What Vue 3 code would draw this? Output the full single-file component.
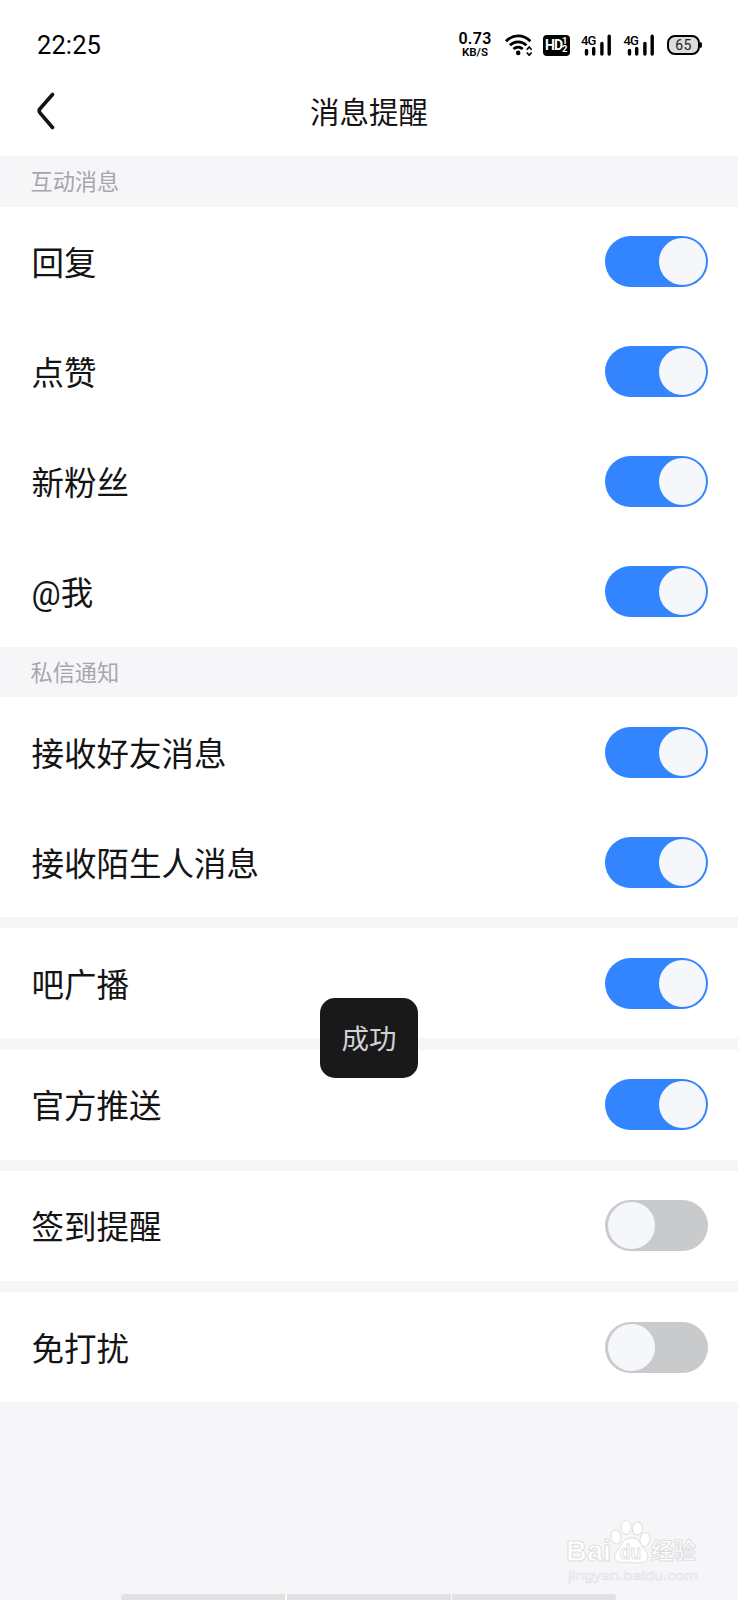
<template>
  <div class="page">
    <header class="status-bar">
      <span class="clock">22:25</span>
      <div class="indicators">
        <div class="speed">
          <span class="speed-value">0.73</span>
          <span class="speed-unit">KB/S</span>
        </div>
        <svg class="wifi" viewBox="0 0 28 22">
          <g fill="none" stroke="#000" stroke-width="2.8">
            <path d="M1 7.200C8 .2 18.400 .2 25.400 7.200" />
            <path d="M4.900 11.300C9.500 6.600 16.700 6.600 21.400 11.300" />
            <path d="M8.500 15.100C11.200 12.400 15 12.400 17.700 15.100" />
          </g>
          <circle cx="13.200" cy="18.900" r="2.300" />
          <path d="M21.800 15.700l2.400-2.700 2.400 2.700M21.800 18.500l2.400 2.700 2.400-2.700" fill="none" stroke="#000" stroke-width="1.700" />
        </svg>
        <div class="hd">
          <span class="hd-text">HD</span>
          <span class="hd-sims"><i>1</i><i>2</i></span>
        </div>
        <div v-for="n in 2" :key="n" class="signal">
          <span class="network">4G</span>
          <svg class="bars" viewBox="0 0 32 22">
            <path d="M5.500 16.500V20M12.700 14.500V20M20.900 9.500V20M28.200 2.300V20" fill="none" stroke="#000" stroke-width="3.400" stroke-linecap="round" />
          </svg>
        </div>
        <div class="battery">65</div>
      </div>
    </header>

    <nav class="nav-bar">
      <button class="back" aria-label="返回">
        <svg viewBox="0 0 20 38">
          <path d="M16.500 2.500 4 16.800Q2.300 18.800 4 20.800L16.500 35.500" fill="none" stroke="#141414" stroke-width="3.600" stroke-linecap="round" stroke-linejoin="round" />
        </svg>
      </button>
      <h1>消息提醒</h1>
    </nav>

    <section v-for="(group, i) in groups" :key="i">
      <h2 v-if="group.title" class="group-title">{{ group.title }}</h2>
      <div v-else class="gap"></div>
      <div v-for="item in group.items" :key="item.label" class="row">
        <span class="label">{{ item.label }}</span>
        <button
          class="switch"
          :class="{ on: item.on }"
          role="switch"
          :aria-checked="item.on"
          :aria-label="item.label"
          @click="toggle(item)"
        ><span class="knob"></span></button>
      </div>
    </section>

    <div v-if="toast" class="toast">{{ toast }}</div>

    <div class="watermark">
      <svg viewBox="0 0 136 64">
        <g class="mark">
          <text x="0" y="41" class="brand" textLength="45" lengthAdjust="spacingAndGlyphs">Bai</text>
          <ellipse cx="50" cy="17" rx="5" ry="7" transform="rotate(-8 50 17)" />
          <ellipse cx="60" cy="7.500" rx="5" ry="7" />
          <ellipse cx="71.500" cy="8.500" rx="5" ry="6.500" transform="rotate(8 71.500 8.500)" />
          <ellipse cx="79" cy="19.500" rx="5" ry="7" transform="rotate(12 79 19.500)" />
          <path d="M65 18C56 18 56 26 51 31C44 42 53 44 65 42C77 45 87 41 79 30C74 25 74 18 65 18Z" />
          <text x="54" y="39" class="du" textLength="21" lengthAdjust="spacingAndGlyphs">du</text>
          <text x="85" y="39" class="exp" textLength="45" lengthAdjust="spacingAndGlyphs">经验</text>
        </g>
        <text x="2" y="60" class="url" textLength="130" lengthAdjust="spacingAndGlyphs">jingyan.baidu.com</text>
      </svg>
    </div>

    <div class="bottom-bar"><span></span><span></span><span></span></div>
  </div>
</template>

<script setup>
import { ref } from 'vue'

const toast = ref('成功')

const groups = ref([
  {
    title: '互动消息',
    items: [
      { label: '回复', on: true },
      { label: '点赞', on: true },
      { label: '新粉丝', on: true },
      { label: '@我', on: true }
    ]
  },
  {
    title: '私信通知',
    items: [
      { label: '接收好友消息', on: true },
      { label: '接收陌生人消息', on: true }
    ]
  },
  { items: [{ label: '吧广播', on: true }] },
  { items: [{ label: '官方推送', on: true }] },
  { items: [{ label: '签到提醒', on: false }] },
  { items: [{ label: '免打扰', on: false }] }
])

function toggle(item) {
  item.on = !item.on
  toast.value = '成功'
}
</script>

<style>
body { background: #f6f6f9; }
</style>

<style scoped>
.page {
  position: relative;
  box-sizing: border-box;
  height: 1600px;
  overflow: hidden;
  background: #f6f6f9;
  color: #141414;
  font-family: Roboto, "Noto Sans CJK SC", sans-serif;
}
button { border: 0; padding: 0; background: none; cursor: pointer; }
h1, h2 { margin: 0; font-weight: 400; }

/* status bar */
.status-bar {
  box-sizing: border-box;
  height: 76px;
  padding: 14px 36px 0 37px;
  display: flex;
  align-items: center;
  justify-content: space-between;
  background: #fff;
  color: #000;
}
.clock { font-size: 25.500px; line-height: 30px; letter-spacing: 0.1px; }
.indicators { display: flex; align-items: center; }
.speed {
  width: 34px;
  margin-right: 13px;
  display: flex;
  flex-direction: column;
  align-items: center;
  font-weight: 600;
}
.speed-value { font-size: 16px; line-height: 14px; letter-spacing: 0.3px; }
.speed-unit { font-size: 11.500px; line-height: 13px; }
.wifi { width: 28px; height: 22px; margin-right: 10px; }
.hd {
  box-sizing: border-box;
  width: 27px;
  height: 21px;
  margin-right: 11px;
  padding-left: 2px;
  display: flex;
  align-items: center;
  border-radius: 4px;
  background: #000;
  color: #fff;
  font-weight: 700;
}
.hd-text { width: 17px; font-size: 14px; letter-spacing: -0.8px; }
.hd-sims { display: flex; flex-direction: column; }
.hd-sims i { font-size: 9.500px; line-height: 8.500px; font-style: normal; }
.signal { position: relative; width: 32px; height: 22px; margin-right: 10.500px; }
.bars { display: block; width: 32px; height: 22px; }
.network { position: absolute; left: 0; top: 0; font-size: 13px; line-height: 13px; font-weight: 500; letter-spacing: -0.8px; }
.battery {
  position: relative;
  box-sizing: border-box;
  width: 33px;
  height: 20px;
  margin: 0 2px 0 1px;
  border: 2px solid #000;
  border-radius: 8px;
  background: #ddd;
  color: #222;
  font-size: 14px;
  line-height: 17px;
  letter-spacing: 0.5px;
  text-align: center;
}
.battery::after {
  content: "";
  position: absolute;
  right: -4px;
  top: 5px;
  width: 2px;
  height: 6px;
  border-radius: 0 2px 2px 0;
  background: #000;
}

/* title bar */
.nav-bar {
  height: 80px;
  display: grid;
  grid-template-columns: 80px 1fr 80px;
  align-items: center;
  background: #fff;
}
.back { width: 20px; height: 38px; margin: -10px 0 0 36px; }
.back svg { display: block; width: 20px; height: 38px; }
h1 { margin-top: -7px; font-size: 29.500px; line-height: 40px; text-align: center; }

/* settings list */
.group-title {
  height: 50.500px;
  padding-left: 30.500px;
  color: #a7a6ad;
  font-size: 22.200px;
  line-height: 53px;
}
.gap { height: 11.150px; }
.row {
  height: 110.050px;
  padding: 0 30.500px 0 31.500px;
  display: flex;
  align-items: center;
  justify-content: space-between;
  background: #fff;
}
.label { font-size: 32.500px; line-height: 44px; padding-top: 5px; }
.switch {
  box-sizing: border-box;
  width: 102.500px;
  height: 51px;
  padding: 2px 2px 2px 3px;
  display: flex;
  border-radius: 26px;
  background: #c9cacc;
}
.switch.on { justify-content: flex-end; background: #3385ff; }
.knob { width: 46.500px; height: 47px; border-radius: 50%; background: #f5f7fb; }

.toast {
  position: absolute;
  left: 320px;
  top: 997.500px;
  width: 98px;
  height: 80px;
  border-radius: 15px;
  background: #191919;
  color: #d2d2d6;
  font-size: 27.500px;
  line-height: 84px;
  text-align: center;
}

.watermark { position: absolute; left: 566px; top: 1520px; width: 136px; height: 64px; }
.watermark svg { display: block; }
.mark { fill: #fff; stroke: #dedee1; stroke-width: 1; }
.brand { font: 700 29px "Liberation Sans", sans-serif; }
.du { font: 700 20px "Liberation Sans", sans-serif; }
.exp { font: 700 23px "Noto Sans CJK SC", sans-serif; }
.url { font: 13.500px "Liberation Sans", sans-serif; fill: #fbfbfd; stroke: #e2e2e5; stroke-width: 0.6; }

.bottom-bar {
  position: absolute;
  left: 121px;
  bottom: 0;
  width: 495px;
  height: 6px;
  display: flex;
  gap: 1.500px;
  overflow: hidden;
  border-radius: 3px 3px 0 0;
  background: #fafafb;
}
.bottom-bar span { flex: 1; background: #e2e2e4; }
</style>
